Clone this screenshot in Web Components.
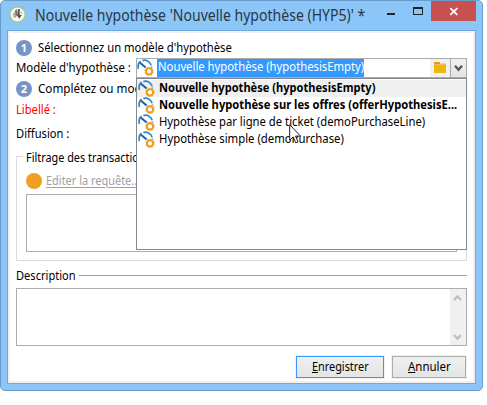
<!DOCTYPE html>
<html lang="fr"><head><meta charset="utf-8"><title>Nouvelle hypothèse</title>
<style>body{margin:0;width:487px;height:405px;background:#fff;overflow:hidden;font:12px "Noto Sans","Open Sans",sans-serif;color:#000}</style></head><body>
<hypothesis-window></hypothesis-window>
<script>
const define=(name,html,init)=>customElements.define(name,class extends HTMLElement{
  connectedCallback(){ if(this.shadowRoot)return; this.attachShadow({mode:'open'}).innerHTML=html; init&&init(this,this.shadowRoot); }
});

/* Text fitted horizontally to the width given in "w" */
define('fit-text',`<style>:host{display:block;flex:none;line-height:17px;height:17px;white-space:nowrap}span{display:inline-block;transform-origin:0 50%;white-space:pre}</style><span><slot></slot></span>`,(h,r)=>{
  const w=+h.getAttribute('w'),s=r.querySelector('span');
  h.style.width=w+'px';
  s.style.transform='scaleX('+w/s.offsetWidth+')';
});

define('gauge-icon',`<style>:host{display:block;flex:none;width:17px;height:17px}svg{display:block}</style>
<svg width="17" height="17" viewBox="0 0 17 17" fill="none"><path d="M1.4 10C.5 6 1.6 3.6 3.6 2.2M5.4 1.6C9 .4 12.8 2.3 14.2 6.2M14.5 7.4V8.4" stroke="#2c86d2" stroke-width="1.7"/><path d="M3 3.8L8.6 8.6" stroke="#1f5fa6" stroke-width="2"/><circle cx="12" cy="12.4" r="4.3" stroke="#f6ad45" stroke-width=".9" stroke-dasharray="1.7 1.68"/><circle cx="12" cy="12.4" r="3.1" fill="#fff" stroke="#f39b16" stroke-width="1.9"/></svg>`);

define('step-badge',`<style>:host{display:flex;flex:none;width:16px;height:16px;border-radius:50%;background:#7695c4;color:#fff;font-weight:bold;font-size:11px;line-height:16px;justify-content:center}</style><slot></slot>`);

define('title-bar',`<style>:host{display:flex;height:30px;align-items:flex-start;color:#2b3744;font-size:16px;position:relative}
.logo{margin:5px 0 0 8px}fit-text{margin:6px 0 0 9px}.sp{flex:1}
.min{width:8px;height:2px;background:#222;margin:12px 18px 0 0}.max{box-sizing:border-box;width:10px;height:8px;border:1px solid #222;border-top-width:2px;margin:6px 8px 0 0}
.close{width:45px;height:20px;background:#c75050;margin-right:6px}svg{display:block}</style>
<svg class="logo" width="17" height="17" viewBox="0 0 17 17"><circle cx="8.5" cy="8.5" r="7.6" fill="#f8faf6" stroke="#a1c875" stroke-width="1.2"/><path d="M3.5 8l2-3 1 6-2 1z" fill="#bbb"/><path d="M6 4.5l2-1.5v6l-1.6 3z" fill="#777"/><path d="M9 3h1.7v6H13l-2.8 3.8L8 9.5z" fill="#555"/><path d="M11.5 4.5l2 2v2l-2-.5z" fill="#ccc"/></svg>
<fit-text w="330">Nouvelle hypothèse 'Nouvelle hypothèse (HYP5)' *</fit-text><div class="sp"></div><div class="min"></div><div class="max"></div>
<div class="close"><svg width="45" height="20"><path d="M19.3 7.2l7 6.6M26.3 7.2l-7 6.6" stroke="#fff" stroke-width="1.8"/></svg></div>`);

define('option-row',`<style>:host{display:flex;height:17px;padding-left:1px}:host([selected]){background:#f0f0f0}:host([strong]){font-weight:bold}fit-text{margin:-1px 0 0 4px}</style><gauge-icon></gauge-icon><fit-text></fit-text>`,(h,r)=>{
  const old=r.querySelector('fit-text'),t=document.createElement('fit-text');
  t.setAttribute('w',h.getAttribute('w'));t.textContent=h.getAttribute('label');old.replaceWith(t);
});

define('drop-list',`<style>:host{display:block;box-sizing:border-box;position:absolute;z-index:2;left:-1px;top:19px;width:331px;height:172px;border:1px solid #828790;background:#fff;padding-top:1px}</style>
<option-row selected strong w="216" label="Nouvelle hypothèse (hypothesisEmpty)"></option-row>
<option-row strong w="298" label="Nouvelle hypothèse sur les offres (offerHypothesisE..."></option-row>
<option-row w="266" label="Hypothèse par ligne de ticket (demoPurchaseLine)"></option-row>
<option-row w="185" label="Hypothèse simple (demoPurchase)"></option-row>`);

define('model-combo',`<style>:host{display:flex;box-sizing:border-box;position:relative;width:331px;height:20px;border:1px solid #ababab;background:#fff}
gauge-icon{margin:0}.sel{background:#3399ff;color:#fff;height:18px;width:206px;padding-left:1px;margin-left:3px}.sel fit-text{margin-top:-1px}.sp{flex:1}
.folder{width:20px;background:#f0f0f0}.arrow{box-sizing:border-box;width:17px;height:20px;margin:-1px -1px 0 0;border:1px solid #ababab;background:linear-gradient(#f1f1f1,#e4e4e4)}svg{display:block}</style>
<gauge-icon></gauge-icon><div class="sel"><fit-text w="206">Nouvelle hypothèse (hypothesisEmpty)</fit-text></div><div class="sp"></div>
<div class="folder"><svg width="20" height="18"><path d="M4 3h6v3H4z" fill="#ee9614"/><path d="M10 4h6v2h-6z" fill="#f6cf91"/><path d="M4 6h12v8H4z" fill="#efb70a"/><path d="M4 5.5h12" stroke="#f3bd65"/></svg></div>
<div class="arrow"><svg width="15" height="18"><path d="M4 6.8l3.5 4 3.5-4" fill="none" stroke="#555" stroke-width="2.4"/></svg></div><drop-list></drop-list>`);

define('query-group',`<style>:host{display:block;box-sizing:border-box;width:451px;height:105px;border:1px solid #dcdcdc;position:relative}
.cap{width:max-content;margin:-8px 0 0 6px;padding:0 3px;background:#fff}.edit{display:flex;align-items:center;height:17px;margin:6px 0 0 9px;color:#a0a0a0}
.dot{width:16px;height:16px;border-radius:50%;background:#f0a020;margin-right:4px}u{text-underline-offset:2px}.box{box-sizing:border-box;margin:5px 9px 0;height:58px;border:1px solid #ababab}.edit fit-text{margin-top:-1px}</style>
<div class="cap"><fit-text w="125">Filtrage des transactions</fit-text></div><div class="edit"><div class="dot"></div><fit-text w="94"><u>Editer la requête...</u></fit-text></div><div class="box"></div>`);

define('memo-field',`<style>:host{display:flex;box-sizing:border-box;width:451px;height:58px;border:1px solid #ababb0;justify-content:flex-end}.bar{width:16px;background:#f0f0f0}svg{display:block}</style>
<div class="bar"><svg width="16" height="56" fill="none" stroke="#bfbfbf" stroke-width="2.3"><path d="M4 11l3.5-3.6L11 11M4 46l3.5 3.6L11 46"/></svg></div>`);

define('push-button',`<style>:host{display:flex;box-sizing:border-box;height:22px;border:1px solid #ababab;background:linear-gradient(#f0f0f0,#e4e4e4);justify-content:center;align-items:center;box-shadow:0 0 0 1px #f0f0f0}:host([primary]){border-color:#3399ff}fit-text{margin-top:-1px}</style><slot></slot>`);

define('hypothesis-window',`<style>:host{display:block;box-sizing:border-box;width:483px;height:391px;background:#8cc6f8;border:1px solid #6a9bca;border-radius:5px}
.client{box-sizing:border-box;margin:-1px 6px 0;height:354px;border:1px solid #6fa8dc;background:#fff;box-shadow:inset 0 0 0 2px #f0f0f0;padding:8px 8px 0}
.row{display:flex;align-items:center}.head{height:17px;gap:6px}.head fit-text{margin-top:-1px}.pick{height:20px;margin-top:2px}.pick fit-text{margin-right:5px;margin-top:-2px}.two{margin-top:2px}.lib{height:17px;margin-top:4px;color:#f00}.dif{height:17px;margin-top:7px}
query-group{margin-top:14px}.desc{height:17px;margin-top:6px}.desc i{flex:none;width:388px;height:1px;background:#a0a0a0;margin-left:3px}.desc fit-text{margin-top:-1px}memo-field{margin-top:4px}.actions{justify-content:flex-end;margin:10px 1px 0 0;gap:8px}.actions fit-text{margin-top:-1px}.a{width:88px}.b{width:74px}
.body{position:relative;width:451px}.cursor{position:absolute;left:273px;top:85px;z-index:4}</style>
<title-bar></title-bar><div class="client"><div class="body">
<div class="row head"><step-badge>1</step-badge><fit-text w="194">Sélectionnez un modèle d'hypothèse</fit-text></div>
<div class="row pick"><fit-text w="115">Modèle d'hypothèse :</fit-text><model-combo></model-combo></div>
<div class="row head two"><step-badge>2</step-badge><fit-text w="104">Complétez ou mod</fit-text></div>
<div class="row lib"><fit-text w="40">Libellé :</fit-text></div>
<div class="row dif"><fit-text w="53">Diffusion :</fit-text></div>
<query-group></query-group>
<div class="row desc"><fit-text w="60">Description</fit-text><i></i></div>
<memo-field></memo-field>
<div class="row actions"><push-button primary class="a"><fit-text w="57"><u>E</u>nregistrer</fit-text></push-button><push-button class="b"><fit-text w="43"><u>A</u>nnuler</fit-text></push-button></div>
<svg class="cursor" width="13" height="20"><path d="M.7.7v15.5l3.5-3.3 2.6 6 2.3-1-2.6-5.8h5z" fill="#fff" stroke="#222"/></svg>
</div></div>`);
</script></body></html>
